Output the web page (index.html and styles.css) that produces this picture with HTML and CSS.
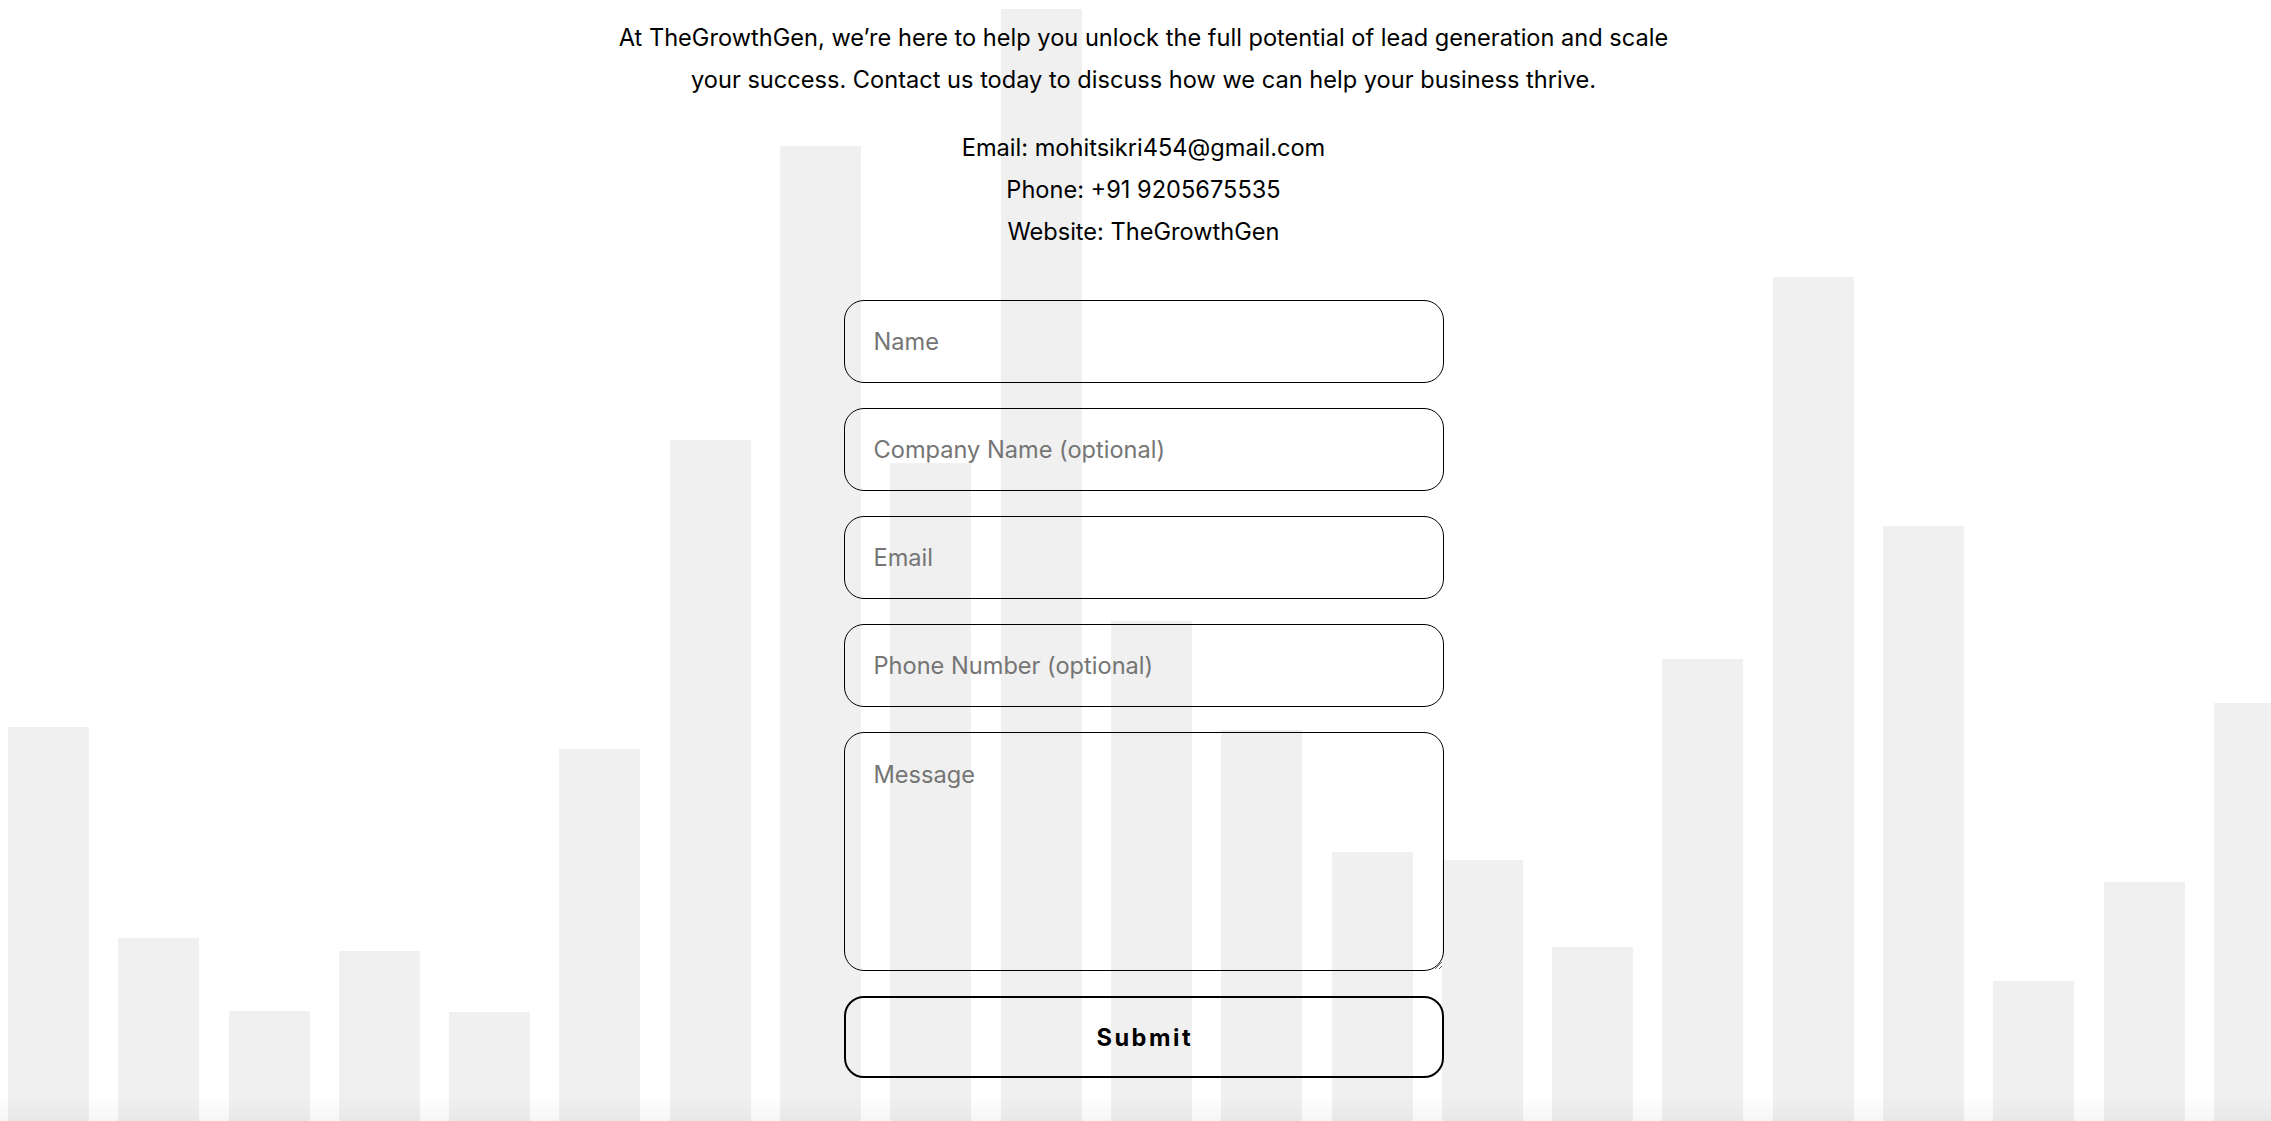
FILE: index.html
```html
<!DOCTYPE html>
<html lang="en">
<head>
<meta charset="utf-8">
<title>Contact - TheGrowthGen</title>
<link rel="stylesheet" href="styles.css">
</head>
<body>
<section class="contact">
  <div class="bars" aria-hidden="true">
    <div class="bar" style="height:394px"></div>
    <div class="bar" style="height:183px"></div>
    <div class="bar" style="height:110px"></div>
    <div class="bar" style="height:170px"></div>
    <div class="bar" style="height:109px"></div>
    <div class="bar" style="height:372px"></div>
    <div class="bar" style="height:681px"></div>
    <div class="bar" style="height:975px"></div>
    <div class="bar" style="height:658px"></div>
    <div class="bar" style="height:1112px"></div>
    <div class="bar" style="height:500px"></div>
    <div class="bar" style="height:391px"></div>
    <div class="bar" style="height:269px"></div>
    <div class="bar" style="height:261px"></div>
    <div class="bar" style="height:174px"></div>
    <div class="bar" style="height:462px"></div>
    <div class="bar" style="height:844px"></div>
    <div class="bar" style="height:595px"></div>
    <div class="bar" style="height:140px"></div>
    <div class="bar" style="height:239px"></div>
    <div class="bar" style="height:418px"></div>
  </div>
  <div class="content">
    <p class="intro">At TheGrowthGen, we’re here to help you unlock the full potential of lead generation and scale your success. Contact us today to discuss how we can help your business thrive.</p>
    <div class="info">
      <p>Email: mohitsikri454@gmail.com</p>
      <p>Phone: +91 9205675535</p>
      <p>Website: TheGrowthGen</p>
    </div>
    <form class="form">
      <input class="field" type="text" placeholder="Name">
      <input class="field" type="text" placeholder="Company Name (optional)">
      <input class="field" type="email" placeholder="Email">
      <input class="field" type="tel" placeholder="Phone Number (optional)">
      <textarea class="field message" placeholder="Message"></textarea>
      <button class="submit" type="button">Submit</button>
    </form>
  </div>
  <div class="fade" aria-hidden="true"></div>
</section>
</body>
</html>
```
FILE: styles.css
```css
html, body {
  overflow: hidden;
}
body {
  margin: 0;
  background: #ffffff;
  font-family: Inter, "Noto Sans", Arial, sans-serif;
  color: #000;
}
.contact {
  position: relative;
  margin-left: 8px;
  width: 100vw;
  height: 100vh;
  box-sizing: border-box;
  padding-top: 17px;
}
.bars {
  position: absolute;
  left: 0;
  right: 0;
  top: 0;
  bottom: 0;
  display: flex;
  align-items: flex-end;
  gap: 29.3px;
  z-index: 0;
}
.bar {
  flex: 0 0 81px;
  background: #f0f0f0;
}
.fade {
  position: absolute;
  left: -8px;
  right: 0;
  bottom: 0;
  height: 26px;
  background: linear-gradient(to bottom, rgba(0,0,0,0) 0%, rgba(0,0,0,0.035) 100%);
  z-index: 2;
}
.content {
  position: relative;
  z-index: 1;
  display: flex;
  flex-direction: column;
  align-items: center;
}
.intro {
  margin: 0;
  max-width: 1090px;
  text-align: center;
  font-size: 23.6px;
  line-height: 42px;
}
.info {
  margin-top: 25.5px;
  text-align: center;
  font-size: 23.6px;
  line-height: 42px;
}
.info p {
  margin: 0;
}
.form {
  margin-top: 47.5px;
  width: 600px;
  display: flex;
  flex-direction: column;
  gap: 25px;
}
.field {
  box-sizing: border-box;
  width: 100%;
  height: 83px;
  margin: 0;
  padding: 0 29px;
  border: 1px solid #000;
  border-radius: 20px;
  background: transparent;
  font-family: Inter, "Noto Sans", Arial, sans-serif;
  font-size: 23.6px;
  color: #000;
  outline: none;
}
.field::placeholder {
  color: #757575;
}
.message {
  height: 239px;
  padding: 27px 29px;
  resize: vertical;
  display: block;
}
.submit {
  box-sizing: border-box;
  width: 100%;
  height: 82px;
  margin: 0;
  border: 2px solid #000;
  border-radius: 20px;
  background: transparent;
  font-family: Inter, "Noto Sans", Arial, sans-serif;
  font-size: 23.6px;
  font-weight: 700;
  letter-spacing: 2.5px;
  text-indent: 2.5px;
  color: #000;
  cursor: pointer;
}
```
